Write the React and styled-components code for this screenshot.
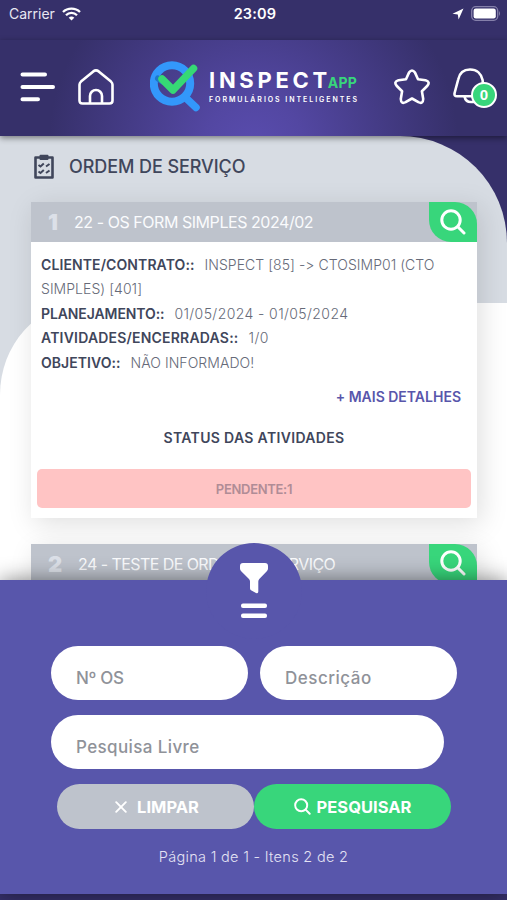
import React from 'react';
import styled, { createGlobalStyle, ThemeProvider } from 'styled-components';

const theme = {
  color: {
    navy: '#36306a',
    purple: '#5856ab',
    green: '#38d67b',
    grey: '#bec3cc',
    backgroundGrey: '#d7dce3',
    text: '#40465b',
    textLight: '#666a78',
    placeholder: '#8f9299',
  },
};

const GlobalStyle = createGlobalStyle`
  *, *::before, *::after {
    box-sizing: border-box;
  }

  body {
    margin: 0;
    font-family: Inter, 'Open Sans', sans-serif;
    font-feature-settings: 'calt' 0;
  }
`;

const Screen = styled.div`
  width: 507px;
  height: 900px;
  display: flex;
  flex-direction: column;
  overflow: hidden;
  background-color: ${({ theme }) => theme.color.navy};
`;

const StatusBar = styled.div`
  height: 40px;
  flex-shrink: 0;
  padding: 0 6px 13px 9px;
  display: grid;
  grid-template-columns: 1fr auto 1fr;
  align-items: center;
  color: #e8e7f2;
  font-size: 14px;
`;

const StatusGroup = styled.div`
  display: flex;
  align-items: center;
  gap: 7px;
  justify-content: ${({ $end }) => ($end ? 'flex-end' : 'flex-start')};
`;

const Clock = styled.span`
  font-size: 14.5px;
  font-weight: 600;
  color: #fff;
  letter-spacing: 0.2px;
`;

const StyledHeader = styled.header`
  height: 96px;
  flex-shrink: 0;
  padding: 0 9px 3px 20px;
  display: flex;
  align-items: center;
  position: relative;
  z-index: 2;
  background: radial-gradient(circle at 50% 112%, #594cae 0, #5347a2 50px, #36306a 205px);
  box-shadow: 0 2px 6px rgba(0, 0, 0, 0.45);
`;

const HeaderButton = styled.button`
  border: 0;
  padding: 0;
  background: none;
  display: flex;
  position: relative;
  margin-left: ${({ $left }) => $left || 0}px;
`;

const Brand = styled.div`
  display: flex;
  align-items: center;
  gap: 8px;
  margin-left: 36px;
`;

const BrandText = styled.div`
  width: 151px;
  display: flex;
  flex-direction: column;
  color: #fff;
  white-space: nowrap;
`;

const BrandName = styled.div`
  font-size: 22px;
  line-height: 21px;
  font-weight: 700;
  letter-spacing: 3.7px;
`;

const BrandSuffix = styled.span`
  margin-left: -3px;
  color: ${({ theme }) => theme.color.green};
  font-size: 14px;
  font-weight: 700;
  letter-spacing: 0.2px;
`;

const BrandTagline = styled.div`
  margin-top: 2px;
  font-size: 7px;
  line-height: 9px;
  font-weight: 600;
  letter-spacing: 1.95px;
`;

const Badge = styled.span`
  position: absolute;
  right: 1px;
  bottom: -3px;
  width: 26px;
  height: 26px;
  border-radius: 50%;
  border: 2px solid #fff;
  background-color: ${({ theme }) => theme.color.green};
  color: #fff;
  font-size: 15px;
  font-weight: 700;
  line-height: 22px;
  text-align: center;
`;

const Content = styled.main`
  flex: 1;
  min-height: 0;
  padding: 16px 30px 0 31px;
  overflow: hidden;
  position: relative;
  isolation: isolate;

  &::before {
    content: '';
    position: absolute;
    inset: 0;
    z-index: -2;
    background-color: ${({ theme }) => theme.color.backgroundGrey};
    border-top-right-radius: 107px;
  }

  &::after {
    content: '';
    position: absolute;
    inset: 167px 0 0;
    z-index: -1;
    background-color: #fff;
    border-top-left-radius: 84px 92px;
  }
`;

const PageTitle = styled.h1`
  margin: 0 0 21px;
  height: 29px;
  display: flex;
  align-items: center;
  gap: 13px;
  color: ${({ theme }) => theme.color.text};
  font-size: 18px;
  font-weight: 500;
  letter-spacing: -0.08px;

  svg {
    margin-left: 1px;
  }
`;

const StyledCard = styled.section`
  margin-bottom: 26px;
  background-color: #fff;
  box-shadow: 4px 6px 26px rgba(0, 0, 0, 0.13);
`;

const CardHeader = styled.div`
  height: 40px;
  display: flex;
  align-items: center;
  background-color: ${({ theme }) => theme.color.grey};
  color: #fafbfd;
`;

const CardNumber = styled.span`
  width: ${({ $wide }) => ($wide ? 47 : 43)}px;
  padding-left: 17px;
  font-size: 22px;
  font-weight: 900;
  color: #dce0e8;
`;

const CardTitle = styled.span`
  flex: 1;
  font-size: 16px;
  letter-spacing: ${({ $spacing }) => $spacing || 0}px;
`;

const SearchButton = styled.button`
  width: 48px;
  height: 40px;
  border: 0;
  padding: 0 0 1px;
  display: flex;
  align-items: center;
  justify-content: center;
  background-color: ${({ theme }) => theme.color.green};
  border-radius: 0 22px 0 22px;
`;

const CardBody = styled.div`
  padding: 10.5px 6px 10px;
`;

const Field = styled.p`
  margin: 0 4px;
  color: ${({ theme }) => theme.color.textLight};
  font-size: 14px;
  font-weight: 300;
  line-height: 24.5px;
  letter-spacing: ${({ $spacing }) => $spacing || 0}px;
`;

const Label = styled.b`
  margin-right: 10px;
  color: ${({ theme }) => theme.color.text};
  font-weight: 600;
  letter-spacing: ${({ $spacing }) => $spacing || 0}px;
`;

const DetailsLink = styled.a`
  display: block;
  margin: 9.5px 10px 0 0;
  text-align: right;
  font-size: 14px;
  line-height: 24px;
  font-weight: 600;
  color: ${({ theme }) => theme.color.purple};
`;

const StatusTitle = styled.h2`
  margin: 17px 0 19px;
  text-align: center;
  font-size: 14px;
  line-height: 24px;
  font-weight: 600;
  letter-spacing: 0.33px;
  color: ${({ theme }) => theme.color.text};
`;

const StatusTag = styled.div`
  height: 39px;
  border-radius: 5px;
  background-color: #ffc4c4;
  color: #b08c96;
  font-size: 13px;
  font-weight: 600;
  line-height: 40px;
  letter-spacing: -0.3px;
  text-align: center;
`;

const FilterPanel = styled.form`
  height: 314px;
  flex-shrink: 0;
  margin: 0 0 6px;
  padding: 66px 51px 0;
  position: relative;
  z-index: 1;
  background-color: ${({ theme }) => theme.color.purple};
  box-shadow: 0 0 20px rgba(0, 0, 0, 0.48);
`;

const FilterHandle = styled.div`
  position: absolute;
  top: -37.5px;
  left: 206px;
  width: 96px;
  height: 96px;
  padding-top: 19px;
  border-radius: 50%;
  display: flex;
  flex-direction: column;
  align-items: center;
  background-color: ${({ theme }) => theme.color.purple};
`;

const FilterRow = styled.div`
  display: flex;
  gap: 12px;
  margin-bottom: 15px;
`;

const Input = styled.input`
  width: ${({ $full }) => ($full ? 393 : 197)}px;
  height: 54px;
  flex-shrink: 0;
  border: 0;
  border-radius: 27px;
  padding: 9px 25px 0;
  background-color: #fff;
  font-family: inherit;
  font-size: 17px;
  font-weight: 500;
  letter-spacing: ${({ $spacing }) => $spacing || 0}px;

  &::placeholder {
    color: ${({ theme }) => theme.color.placeholder};
    opacity: 1;
  }
`;

const ButtonRow = styled.div`
  display: flex;
  padding-left: 6px;
`;

const Button = styled.button`
  width: 197px;
  height: 45px;
  flex-shrink: 0;
  border: 0;
  border-radius: 23px;
  padding: 0 0 0 ${({ $primary }) => ($primary ? 0 : 3)}px;
  display: flex;
  align-items: center;
  justify-content: center;
  gap: ${({ $primary }) => ($primary ? 6 : 10)}px;
  background-color: ${({ theme, $primary }) => ($primary ? theme.color.green : theme.color.grey)};
  color: #fff;
  font-family: inherit;
  font-size: 16.5px;
  font-weight: 700;
`;

const Pagination = styled.p`
  margin: 16px 0 0;
  text-align: center;
  color: #e4e3f4;
  font-size: 14.5px;
  font-weight: 300;
  line-height: 24px;
  letter-spacing: 0.3px;
`;

const WifiIcon = () => (
  <svg width="19" height="14" viewBox="0 0 19 14" fill="none" stroke="#fff" strokeWidth="2.3">
    <path d="M1 5 C5.5 0.6 13.5 0.6 18 5" />
    <path d="M4 8.2 C7 5.2 12 5.2 15 8.2" />
    <path d="M6.7 10.7 C8.3 9.2 10.7 9.2 12.3 10.7 L9.5 13.6 Z" fill="#fff" stroke="none" />
  </svg>
);

const LocationIcon = () => (
  <svg width="12" height="12" viewBox="0 0 12 12" fill="#fff">
    <path d="M11.5 0.5 L6.6 11.5 L5.8 6.4 L0.5 5.8 Z" />
  </svg>
);

const BatteryIcon = () => (
  <svg width="30" height="15" viewBox="0 0 30 15">
    <rect x="0.7" y="0.7" width="26" height="13.6" rx="4" fill="none" stroke="#8580aa" strokeWidth="1.3" />
    <rect x="2.6" y="2.6" width="22.2" height="9.8" rx="2.2" fill="#fff" />
    <path d="M28 5 q2 2.5 0 5 Z" fill="#8580aa" />
  </svg>
);

const MenuIcon = () => (
  <svg width="35" height="30" viewBox="0 0 35 30" stroke="#fff" strokeWidth="4" strokeLinecap="round">
    <path d="M2.5 2.5 H25 M2.5 15 H33 M2.5 27.3 H18" />
  </svg>
);

const HomeIcon = () => (
  <svg width="36" height="36" viewBox="0 0 36 36" fill="none" stroke="#fff" strokeWidth="2.6" strokeLinejoin="round">
    <path d="M1.5 15.8 Q1.5 14 3 12.6 L15.3 2.4 Q18 0.4 20.7 2.4 L33 12.6 Q34.5 14 34.5 15.8 V31.5 Q34.5 34.5 31.5 34.5 H4.5 Q1.5 34.5 1.5 31.5 Z" />
    <path d="M12 34.5 V27 a6 6 0 0 1 12 0 V34.5" />
  </svg>
);

const LogoIcon = () => (
  <svg width="51" height="51" viewBox="0 0 51 51" fill="none" strokeLinecap="round" strokeLinejoin="round">
    <path d="M37 38 L46 46.5" stroke="#3398fb" strokeWidth="7.5" />
    <circle cx="22" cy="22.5" r="18.2" stroke="#3398fb" strokeWidth="8" />
    <path d="M8 17.5 L12.5 20.5" stroke="#1f78c8" strokeWidth="6" />
    <path d="M12 18 L23 29 L43.5 7.5" stroke="#36d975" strokeWidth="7.5" />
  </svg>
);

const StarIcon = () => (
  <svg width="36" height="36" viewBox="0 0 36 36" fill="none" stroke="#fff" strokeWidth="2.6" strokeLinejoin="round">
    <path d="M15 3.6 Q18 -0.6 21 3.6 L24 10.2 L31.5 11.2 Q36.6 12.6 33.4 16.8 L27.9 22.2 L29.2 30 Q29 35.4 24.4 33.2 L18 29.5 L11.6 33.2 Q7 35.4 6.8 30 L8.1 22.2 L2.6 16.8 Q-0.6 12.6 4.5 11.2 L12 10.2 Z" />
  </svg>
);

const BellIcon = () => (
  <svg width="45" height="37" viewBox="0 0 45 37" fill="none" stroke="#fff" strokeWidth="2.6" strokeLinejoin="round">
    <path d="M17 1.5 C10 1.5 6.3 6 5.2 11.5 L1.6 25 Q0.9 28.3 4 28.3 H31 L29.6 12 C28.3 6 24 1.5 17 1.5 Z" />
    <path d="M11.5 28.5 Q12.5 34 18 34 H22" />
  </svg>
);

const ClipboardIcon = () => (
  <svg width="24" height="26" viewBox="0 0 24 26" fill="none" stroke="#40465b">
    <path d="M8 3.5 H3.5 V23.5 H20.5 V3.5 H16" strokeWidth="2.6" strokeLinejoin="round" />
    <path d="M8.5 1.8 H15.5 V5 H8.5 Z" fill="#40465b" strokeWidth="2" strokeLinejoin="round" />
    <path d="M6.5 11 L8.5 12.5 L11.8 9.5 M6.5 17.5 L8.5 19 L11.8 16" strokeWidth="2" />
    <path d="M14 12.5 L17.5 10 M14 19 L17.5 16.5" strokeWidth="2" />
  </svg>
);

const SearchIcon = ({ size, strokeWidth }) => (
  <svg width={size} height={size} viewBox="0 0 26 26" fill="none" stroke="#fff" strokeWidth={strokeWidth} strokeLinecap="round">
    <circle cx="11" cy="11" r="9.2" />
    <path d="M17.8 17.8 L24 24" />
  </svg>
);

const CloseIcon = () => (
  <svg width="12" height="12" viewBox="0 0 12 12" stroke="#fff" strokeWidth="1.9" strokeLinecap="round">
    <path d="M1.2 1.2 L10.8 10.8 M10.8 1.2 L1.2 10.8" />
  </svg>
);

const FunnelIcon = () => (
  <svg width="30" height="58" viewBox="0 0 30 58" fill="#fff">
    <path d="M4 1 H26 Q29 1 29 4 V6.5 Q29 8 27.8 9.2 L20.3 17 Q19.3 18.2 19.3 19.5 V29.5 Q19.3 32 17 31 L12 28.3 Q11 27.6 11 26.3 V19.5 Q11 18.2 10 17 L2.2 9.2 Q1 8 1 6.5 V4 Q1 1 4 1 Z" />
    <rect x="2" y="41.5" width="26" height="4.6" rx="2" />
    <rect x="2" y="51.5" width="26" height="4.6" rx="2" />
  </svg>
);

const fields = [
  { label: 'CLIENTE/CONTRATO::', value: 'INSPECT [85] -> CTOSIMP01 (CTO SIMPLES) [401]', labelSpacing: 0.1, spacing: 0.04 },
  { label: 'PLANEJAMENTO::', value: '01/05/2024 - 01/05/2024', labelSpacing: -0.1, spacing: 0.4 },
  { label: 'ATIVIDADES/ENCERRADAS::', value: '1/0', labelSpacing: 0.2, spacing: 0.4 },
  { label: 'OBJETIVO::', value: 'NÃO INFORMADO!', labelSpacing: 0.05, spacing: 0.05 },
];

const Card = ({ number, title, spacing, children }) => (
  <StyledCard>
    <CardHeader>
      <CardNumber $wide={number > 1}>{number}</CardNumber>
      <CardTitle $spacing={spacing}>{title}</CardTitle>
      <SearchButton type="button">
        <SearchIcon size={26} strokeWidth={3} />
      </SearchButton>
    </CardHeader>
    <CardBody>{children}</CardBody>
  </StyledCard>
);

const Header = () => (
  <StyledHeader>
    <HeaderButton>
      <MenuIcon />
    </HeaderButton>
    <HeaderButton $left={23}>
      <HomeIcon />
    </HeaderButton>
    <Brand>
      <LogoIcon />
      <BrandText>
        <BrandName>
          INSPECT<BrandSuffix>APP</BrandSuffix>
        </BrandName>
        <BrandTagline>FORMULÁRIOS INTELIGENTES</BrandTagline>
      </BrandText>
    </Brand>
    <HeaderButton $left={34}>
      <StarIcon />
    </HeaderButton>
    <HeaderButton $left={23}>
      <BellIcon />
      <Badge>0</Badge>
    </HeaderButton>
  </StyledHeader>
);

const App = () => {
  return (
    <ThemeProvider theme={theme}>
      <GlobalStyle />
      <Screen>
        <StatusBar>
          <StatusGroup>
            <span>Carrier</span>
            <WifiIcon />
          </StatusGroup>
          <Clock>23:09</Clock>
          <StatusGroup $end>
            <LocationIcon />
            <BatteryIcon />
          </StatusGroup>
        </StatusBar>
        <Header />
        <Content>
          <PageTitle>
            <ClipboardIcon />
            ORDEM DE SERVIÇO
          </PageTitle>
          <Card number={1} title="22 - OS FORM SIMPLES 2024/02" spacing={-0.45}>
            {fields.map(({ label, value, labelSpacing, spacing }) => (
              <Field key={label} $spacing={spacing}>
                <Label $spacing={labelSpacing}>{label}</Label>
                {value}
              </Field>
            ))}
            <DetailsLink>+ MAIS DETALHES</DetailsLink>
            <StatusTitle>STATUS DAS ATIVIDADES</StatusTitle>
            <StatusTag>PENDENTE:1</StatusTag>
          </Card>
          <Card number={2} title="24 - TESTE DE ORDEM DE SERVIÇO" spacing={-0.56} />
        </Content>
        <FilterPanel>
          <FilterHandle>
            <FunnelIcon />
          </FilterHandle>
          <FilterRow>
            <Input placeholder="Nº OS" $spacing={-0.3} />
            <Input placeholder="Descrição" $spacing={0.5} />
          </FilterRow>
          <FilterRow>
            <Input $full placeholder="Pesquisa Livre" $spacing={0.38} />
          </FilterRow>
          <ButtonRow>
            <Button type="button">
              <CloseIcon />
              LIMPAR
            </Button>
            <Button type="button" $primary>
              <SearchIcon size={17} strokeWidth={3} />
              PESQUISAR
            </Button>
          </ButtonRow>
          <Pagination>Página 1 de 1 - Itens 2 de 2</Pagination>
        </FilterPanel>
      </Screen>
    </ThemeProvider>
  );
};

export default App;
